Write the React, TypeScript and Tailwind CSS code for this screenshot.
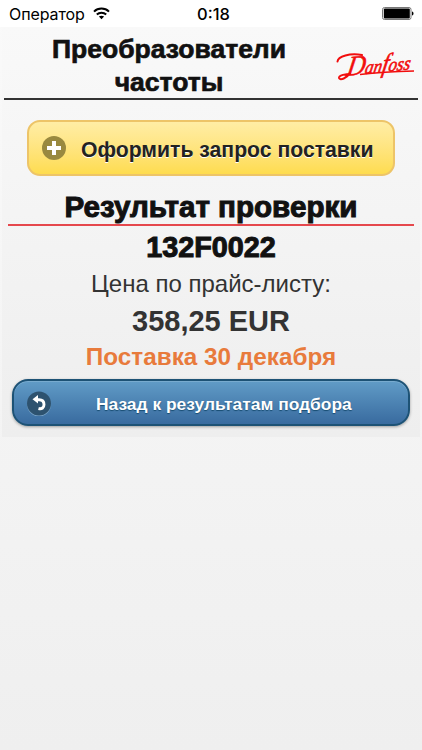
import type {JSX} from 'react';

function StatusBar(): JSX.Element {
    return (
        <div className="grid h-[27px] grid-cols-3 items-center bg-white pr-2 pl-[9px] text-black">
            <div className="flex items-center gap-2">
                <span className="font-['Inter',sans-serif] text-[16px] leading-none tracking-[-0.1px]">Оператор</span>
                <svg width="17" height="13" viewBox="0 0 17 13" fill="none" stroke="black" strokeWidth="2">
                    <path d="M1 4.6C5.1.6 11.9.6 16 4.6"/>
                    <path d="M3.8 7.5c2.6-2.5 6.8-2.5 9.4 0"/>
                    <path d="M8.5 12.2 5.9 9.6c1.5-1.3 3.7-1.3 5.2 0z" fill="black" stroke="none"/>
                </svg>
            </div>
            <span className="pt-px pl-1 text-center font-['Inter',sans-serif] text-[16.500px] leading-none font-medium">0:18</span>
            <svg className="justify-self-end" width="32" height="13" viewBox="0 0 32 13">
                <rect x=".5" y=".5" width="28.5" height="12" rx="2" fill="white" stroke="#777"/>
                <rect x="1.8" y="1.5" width="26" height="10" rx="1" fill="black"/>
                <path d="M30 4.5c2 .3 2 3.7 0 4z" fill="black"/>
            </svg>
        </div>
    );
}

function Logo(): JSX.Element {
    return (
        <svg className="mt-[21px] overflow-visible" width="80" height="34" viewBox="0 0 80 34" fill="none" stroke="#f20d0d">
            <path d="M2.500 13.500C3 8 15 5 27 7" strokeWidth="2" strokeLinecap="round"/>
            <path d="M15 25C12 30 5 33 4 30c-.5-3 7-4 12-4" strokeWidth="2"/>
            <path d="M25 26.500C42 24.500 59 23.500 79 23" strokeWidth="1.500"/>
            <text x="0" y="0" transform="translate(11 28) rotate(-6) skewX(-16)" fill="#f20d0d" strokeWidth=".6"
                  className="font-['Liberation_Serif',serif] text-[19px] italic"
                  textLength="64" lengthAdjust="spacingAndGlyphs">
                <tspan className="text-[28px]">D</tspan>
                <tspan>an</tspan>
                <tspan className="text-[26px]">f</tspan>
                <tspan>oss</tspan>
            </text>
        </svg>
    );
}

function Header(): JSX.Element {
    return (
        <header className="mx-0.5 flex h-[73px] border-b-2 border-[#333] pt-1.5">
            <h1 className="ml-[13px] w-[304px] text-center text-[26.500px] leading-[33px] font-bold [-webkit-text-stroke:0.7px_#111]">
                Преобразователи частоты
            </h1>
            <div className="-mt-1.5 ml-[14px]">
                <Logo/>
            </div>
        </header>
    );
}

function RequestButton(): JSX.Element {
    return (
        <button
            className="mt-5 ml-[25px] flex h-14 w-[368px] items-center rounded-[13px] border-2 border-[#edc468] bg-linear-to-b from-[#ffeda5] to-[#fedc4e] pl-3 text-[21.200px] font-bold text-[#222] [text-shadow:0_1px_0_white]">
            <svg width="26" height="26" viewBox="0 0 26 26">
                <circle cx="13" cy="13" r="12" fill="#99893f"/>
                <path d="M13 6v14M6 13h14" stroke="white" strokeWidth="4"/>
            </svg>
            <span className="ml-[14px] pt-[3px] whitespace-nowrap">Оформить запрос поставки</span>
        </button>
    );
}

function BackButton(): JSX.Element {
    return (
        <button
            className="mt-1.5 ml-2.5 flex h-[47px] w-[398px] items-center rounded-[16px] border-2 border-[#1d5275] bg-linear-to-b from-[#619cc7] to-[#396b9f] pl-3 text-[17.400px] font-bold text-white shadow-[0_1px_3px_#0005,inset_0_1px_0_#78abcf] [text-shadow:0_1px_1px_#164b70]">
            <svg width="26" height="26" viewBox="0 0 26 26" fill="none">
                <circle cx="13" cy="14.500" r="12" fill="#78a3c7"/>
                <circle cx="13" cy="13.500" r="12" fill="#2d526f"/>
                <path d="M12.500 18.500c3.500 1 5.500-1 5.500-4 0-3-2-4.800-5-4.800h-2" stroke="white" strokeWidth="2.900"/>
                <path d="M6.500 9.300 12 5v8.500z" fill="white"/>
            </svg>
            <span className="ml-[44px] pt-[3px] whitespace-nowrap">Назад к результатам подбора</span>
        </button>
    );
}

function App(): JSX.Element {
    return (
        <div
            className="h-[750px] w-[422px] overflow-hidden bg-linear-to-b from-[#fafafa] to-[#efefef] font-['Liberation_Sans',Arial,sans-serif] text-[#111]">
            <StatusBar/>
            <main className="mx-0.5 h-[410px] bg-linear-to-b from-[#f9f9f9] to-[#eeeeee]">
                <Header/>
                <RequestButton/>
                <h2 className="mx-1.5 mt-[11px] h-[39px] border-b-2 border-[#e5484d] text-center text-[29.600px] leading-[39px] font-bold [-webkit-text-stroke:1px_#111]">
                    Результат проверки
                </h2>
                <section className="text-center text-[#333]">
                    <p className="h-[40px] text-[28.800px] leading-[43px] font-bold text-[#111] [-webkit-text-stroke:1px_#111]">132F0022</p>
                    <p className="h-[36px] text-[24px] leading-[36px]">Цена по прайс-листу:</p>
                    <p className="h-[37px] text-[29px] leading-[38px] font-bold">358,25 EUR</p>
                    <p className="h-[34px] text-[24.300px] leading-[35px] font-bold text-[#e87b3c]">Поставка 30 декабря</p>
                </section>
                <BackButton/>
            </main>
        </div>
    );
}

export default App;
